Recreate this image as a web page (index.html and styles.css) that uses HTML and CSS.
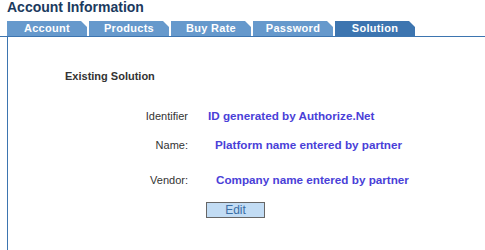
FILE: index.html
```html
<!DOCTYPE html>
<html lang="en">
<head>
  <meta charset="UTF-8">
  <title>Account Information</title>
  <link rel="stylesheet" href="styles.css">
</head>
<body>
  <h1 class="page-title">Account Information</h1>

  <div class="tabs">
    <a class="tab">Account</a>
    <a class="tab">Products</a>
    <a class="tab">Buy Rate</a>
    <a class="tab">Password</a>
    <a class="tab active">Solution</a>
  </div>

  <div class="panel">
    <h2 class="section-title">Existing Solution</h2>

    <div class="field field-id">
      <span class="label">Identifier</span>
      <span class="value">ID generated by Authorize.Net</span>
    </div>
    <div class="field field-name">
      <span class="label">Name:</span>
      <span class="value">Platform name entered by partner</span>
    </div>
    <div class="field field-vendor">
      <span class="label">Vendor:</span>
      <span class="value">Company name entered by partner</span>
    </div>

    <div class="actions">
      <button class="edit-btn">Edit</button>
    </div>
  </div>
</body>
</html>
```

FILE: styles.css
```css
* {
  box-sizing: border-box;
  margin: 0;
  padding: 0;
}

body {
  font-family: "Liberation Sans", Arial, sans-serif;
  background-color: white;
  color: #333;
  width: 485px;
  height: 250px;
  overflow: hidden;
}

.page-title {
  font-size: 14px;
  font-weight: bold;
  color: #1b3a5e;
  padding-left: 7px;
  line-height: 14px;
  height: 21px;
}

.tabs {
  display: flex;
  gap: 2px;
  padding-left: 7px;
  height: 16px;
  border-bottom: 1px solid #3d75b0;
  align-items: flex-start;
}

.tab {
  width: 80px;
  height: 15px;
  line-height: 15px;
  background-color: #6699cc;
  color: white;
  font-size: 11px;
  font-weight: bold;
  text-align: center;
  letter-spacing: 0.3px;
  clip-path: polygon(0 0, 74px 0, 80px 6px, 80px 100%, 0 100%);
}

.tab.active {
  background-color: #3d75b0;
  height: 16px;
}

.panel {
  margin-left: 7px;
  border-left: 1px solid #3d75b0;
  height: 213px;
  padding-top: 33px;
}

.section-title {
  font-size: 11px;
  font-weight: bold;
  color: #333;
  padding-left: 57px;
  line-height: 13px;
}

.field {
  display: flex;
  align-items: baseline;
  font-size: 11px;
  line-height: 13px;
}

.field .label {
  width: 180px;
  text-align: right;
  color: #333;
}

.field .value {
  font-size: 11.7px;
  font-weight: bold;
  color: #4a3fd8;
}

.field-id {
  margin-top: 26px;
}

.field-id .value {
  margin-left: 20px;
}

.field-name {
  margin-top: 15px;
}

.field-name .value {
  margin-left: 27px;
}

.field-vendor {
  margin-top: 21px;
}

.field-vendor .value {
  margin-left: 28px;
}

.actions {
  padding-left: 198px;
  margin-top: 13px;
}

.edit-btn {
  width: 59px;
  height: 16px;
  background-color: #c2dcf4;
  border: 1px solid #666;
  color: #3a6ea5;
  font-family: "Liberation Sans", Arial, sans-serif;
  font-size: 12px;
  line-height: 14px;
}
```
